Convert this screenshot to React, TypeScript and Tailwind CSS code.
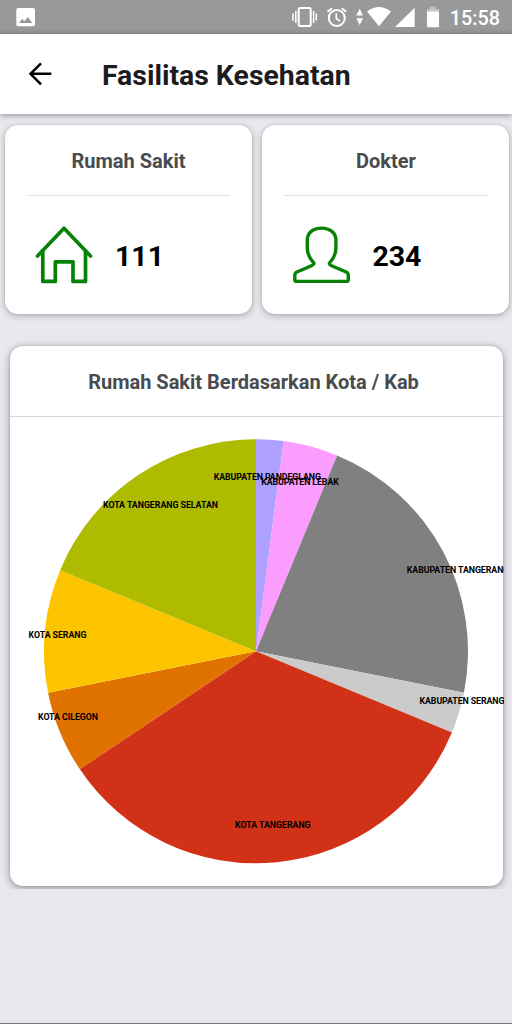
import type { ReactNode } from "react";

type Slice = {
  name: string;
  value: number;
  color: string;
  x: number;
  y: number;
  width: number;
};

const slices: Slice[] = [
  { name: "KABUPATEN PANDEGLANG", value: 2, color: "#ada0ff", x: 213.7, y: 479.5, width: 107.3 },
  { name: "KABUPATEN LEBAK", value: 4, color: "#fb9dff", x: 261.3, y: 485.2, width: 77.5 },
  { name: "KABUPATEN TANGERANG", value: 21, color: "#808080", x: 406.8, y: 573.4, width: 102.5 },
  { name: "KABUPATEN SERANG", value: 3, color: "#cbcbcb", x: 419.5, y: 704.4, width: 85 },
  { name: "KOTA TANGERANG", value: 33, color: "#d13117", x: 235, y: 828.2, width: 75.6 },
  { name: "KOTA CILEGON", value: 6, color: "#e07200", x: 38, y: 720, width: 60 },
  { name: "KOTA SERANG", value: 9, color: "#fdc400", x: 28.6, y: 637.5, width: 57.8 },
  { name: "KOTA TANGERANG SELATAN", value: 18, color: "#afbb00", x: 103, y: 508.2, width: 115 },
];

const CX = 256;
const CY = 651.3;
const R = 212;

function PieChart() {
  const total = slices.reduce((sum, s) => sum + s.value, 0);
  let start = 0;
  const point = (v: number) => {
    const a = (v / total) * Math.PI * 2;
    return `${CX + R * Math.sin(a)} ${CY - R * Math.cos(a)}`;
  };
  return (
    <svg viewBox="10 417 494 469" className="h-[469px] w-[494px] shrink-0">
      {slices.map((s) => {
        const from = start;
        start += s.value;
        return (
          <path
            key={s.name}
            d={`M${CX} ${CY}L${point(from)}A${R} ${R} 0 0 1 ${point(start)}Z`}
            fill={s.color}
          />
        );
      })}
      {slices.map((s) => (
        <text
          key={s.name}
          x={s.x}
          y={s.y}
          textLength={s.width}
          className="fill-black text-[8.8px] font-bold"
        >
          {s.name}
        </text>
      ))}
    </svg>
  );
}

function HouseIcon() {
  return (
    <svg viewBox="34 225 60 60" className="size-[60px]" fill="none" stroke="#078207" strokeWidth="3.7" strokeLinecap="round" strokeLinejoin="round">
      <path d="M37.5 256 64 228.3 90.5 256" />
      <path d="M42.8 251V281.4H55.3V261.8H73V281.4H85.5V251" />
    </svg>
  );
}

function PersonIcon() {
  return (
    <svg viewBox="291 225 60 60" className="size-[60px]" fill="none" stroke="#078207" strokeWidth="3.4" strokeLinecap="round" strokeLinejoin="round">
      <path d="M314 263.2C309.500 258.500 307.300 253.500 307.300 248V239.800C307.300 233 313 228.100 321.500 228.100S335.900 233 335.900 239.800V248C335.900 253.500 333.800 258.500 329.400 263.200C329.100 265 331.800 265.800 334.500 267L346.200 272Q348.300 273 348.300 275.300V279.400Q348.300 281.400 346.300 281.400H296.800Q294.800 281.400 294.800 279.400V275.300Q294.800 273 296.900 272L308.600 267C311.300 265.800 314.200 265 314 263.200Z" />
    </svg>
  );
}

function StatCard({ title, value, icon }: { title: string; value: string; icon: ReactNode }) {
  return (
    <section className="flex h-[189px] w-[247px] flex-col rounded-[13px] bg-white px-[22px] shadow-[0_2px_7px_rgba(0,0,0,0.24),0_0_3px_rgba(0,0,0,0.14)]">
      <h2 className="flex h-[71px] items-center justify-center border-b border-[#e0e0e0] pt-px text-[20px] font-bold text-[#484b4f]">
        {title}
      </h2>
      <div className="flex items-center gap-[21px] pt-[27px] pl-[7px]">
        {icon}
        <span className="pt-1 text-[28.5px] leading-[60px] font-bold text-black">{value}</span>
      </div>
    </section>
  );
}

function StatusBar() {
  return (
    <div className="flex h-[34px] items-center justify-between bg-[#999] text-white">
      <svg viewBox="16 7 20 20" className="ml-[16px] size-5">
        <rect x="16.300" y="8" width="18.700" height="18.300" rx="2" fill="white" />
        <path d="M19 23 22.300 18.800 24.300 21.300 28 17 32.300 23Z" fill="#999" />
      </svg>
      <div className="flex items-center pr-[12px]">
        <svg viewBox="290 4 152 26" className="h-[26px] w-[152px]" fill="white">
          <g fill="none" stroke="white">
            <rect x="298.700" y="8" width="12" height="18" rx="1.300" strokeWidth="2" />
            <path d="M293 13.500V20.500M316.300 13.500V20.500" strokeWidth="1.500" />
            <path d="M295.800 11V23M313.600 11V23" strokeWidth="1.500" />
            <circle cx="336.800" cy="18" r="8" strokeWidth="2" />
            <path d="M336.300 13.300V18.500L340 21" strokeWidth="1.600" />
            <path d="M327.500 11.800 332 8.200M346.200 11.800 341.700 8.200" strokeWidth="2" />
          </g>
          <path d="M356.300 15.500 359.700 8.700 363 15.500ZM356.300 18.200H363L359.700 25Z" />
          <path d="M367 11.500Q378.900 2.500 391 11.500L379 26.200Z" />
          <path d="M395 27 414.700 7.800V27Z" />
          <path d="M430 6.500H435.500V9H439V12H427V9H430Z" opacity=".4" />
          <path d="M427 11.500H439V26.200Q439 27.300 437.900 27.300H428.100Q427 27.300 427 26.200Z" />
        </svg>
        <span className="ml-2 pt-[3px] text-[19.8px] leading-8 font-medium">15:58</span>
      </div>
    </div>
  );
}

export default function App() {
  return (
    <main className="flex h-[1024px] w-[512px] flex-col overflow-hidden border-b border-[#77777b] bg-[#e9e8ee] font-['Roboto',sans-serif]">
      <StatusBar />
      <header className="z-10 flex h-[80px] shrink-0 items-center bg-white shadow-[0_1px_6px_rgba(0,0,0,0.4)]">
        <svg viewBox="28 62 24 24" className="ml-7 size-6" fill="none" stroke="black" strokeWidth="2.500">
          <path d="M51.300 73.800H30.500M41 63.300 30.500 73.800 41 84.300" />
        </svg>
        <h1 className="ml-[50px] pt-[3px] text-[28.4px] leading-8 font-bold text-[#1c1c1e]">Fasilitas Kesehatan</h1>
      </header>
      <div className="flex shrink-0 gap-[10.4px] pt-[11px] pl-[5px]">
        <StatCard title="Rumah Sakit" value="111" icon={<HouseIcon />} />
        <StatCard title="Dokter" value="234" icon={<PersonIcon />} />
      </div>
      <div className="mt-[22px] h-[553px] shrink-0 overflow-hidden px-[10px] pt-[10px]">
        <section className="flex h-[540px] w-[493px] flex-col rounded-[13px] bg-white shadow-[0_2px_8px_rgba(0,0,0,0.36),0_0_3px_rgba(0,0,0,0.14)]">
          <h2 className="flex h-[71px] shrink-0 items-center justify-center border-b border-[#d8d8d8] pt-[2px] pr-[6px] text-[20px] font-bold text-[#484b50]">
            Rumah Sakit Berdasarkan Kota / Kab
          </h2>
          <PieChart />
        </section>
      </div>
    </main>
  );
}
